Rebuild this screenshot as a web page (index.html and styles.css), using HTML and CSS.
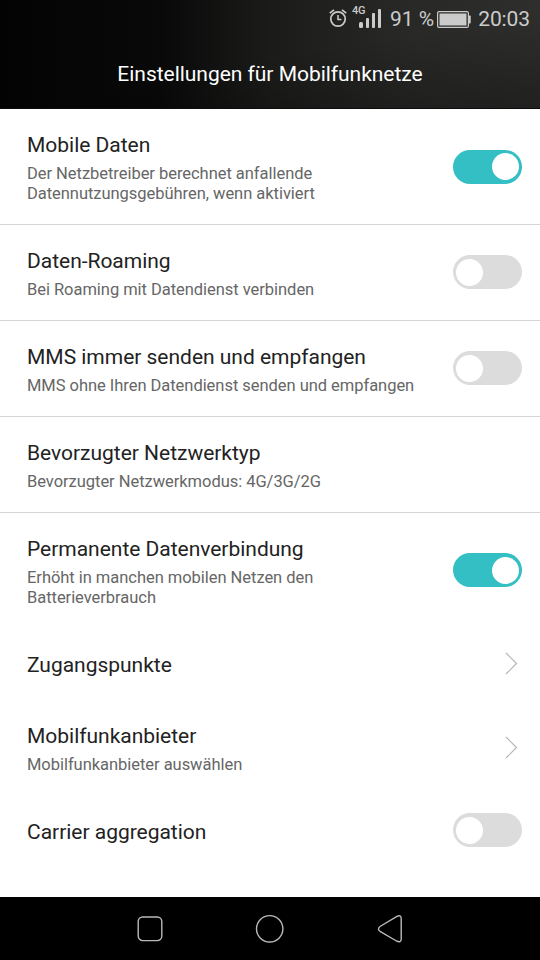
FILE: index.html
```
<!DOCTYPE html>
<html lang="de">
<head>
    <meta charset="UTF-8">
    <meta name="viewport" content="width=device-width, initial-scale=1.0">
    <title>Einstellungen für Mobilfunknetze</title>
    <link rel="stylesheet" href="styles.css">
</head>
<body>
    <div class="screen">
        <div class="header">
            <div class="statusbar">
                <svg class="alarm" width="18" height="20" viewBox="0 0 18 20" fill="none" stroke="#cbcbcb">
                    <circle cx="9" cy="11" r="7.2" stroke-width="1.7"/>
                    <path d="M9 7v4.5h3.4" stroke-width="1.5"/>
                    <path d="M.8 5.2L5 1.8M17.2 5.2L13 1.8" stroke-width="1.7"/>
                </svg>
                <div class="signal">
                    <span class="signal-type">4G</span>
                    <svg width="23" height="20" viewBox="0 0 23 20" fill="#cbcbcb">
                        <rect x="0" y="14" width="4" height="6" rx="1.5"/>
                        <rect x="7" y="10" width="3" height="10" rx="1"/>
                        <rect x="13" y="5" width="3" height="15" rx="1"/>
                        <rect x="19" y="1" width="3" height="19" rx="1"/>
                    </svg>
                </div>
                <span class="percent">91 %</span>
                <svg class="battery" width="34" height="17" viewBox="0 0 34 17">
                    <rect x=".6" y=".6" width="30.8" height="15.8" rx="1.5" fill="none" stroke="#cbcbcb" stroke-width="1.2"/>
                    <rect x="2.5" y="2.5" width="27" height="12" fill="#cbcbcb"/>
                    <rect x="31.5" y="4.5" width="2.2" height="8" rx=".8" fill="#cbcbcb"/>
                </svg>
                <span class="clock">20:03</span>
            </div>
            <h1>Einstellungen für Mobilfunknetze</h1>
        </div>

        <div class="settings">
            <div class="row tall line">
                <div class="text">
                    <div class="name">Mobile Daten</div>
                    <div class="info">Der Netzbetreiber berechnet anfallende<br>Datennutzungsgebühren, wenn aktiviert</div>
                </div>
                <div class="switch on"></div>
            </div>
            <div class="row line">
                <div class="text">
                    <div class="name">Daten-Roaming</div>
                    <div class="info">Bei Roaming mit Datendienst verbinden</div>
                </div>
                <div class="switch"></div>
            </div>
            <div class="row line">
                <div class="text">
                    <div class="name">MMS immer senden und empfangen</div>
                    <div class="info">MMS ohne Ihren Datendienst senden und empfangen</div>
                </div>
                <div class="switch"></div>
            </div>
            <div class="row line">
                <div class="text">
                    <div class="name">Bevorzugter Netzwerktyp</div>
                    <div class="info">Bevorzugter Netzwerkmodus: 4G/3G/2G</div>
                </div>
            </div>
            <div class="row tall last">
                <div class="text">
                    <div class="name">Permanente Datenverbindung</div>
                    <div class="info">Erhöht in manchen mobilen Netzen den<br>Batterieverbrauch</div>
                </div>
                <div class="switch on"></div>
            </div>
            <div class="row single">
                <div class="text">
                    <div class="name">Zugangspunkte</div>
                </div>
                <svg class="chevron" width="13" height="23" viewBox="0 0 13 23"><path d="M1 1l10.5 10.5L1 22"/></svg>
            </div>
            <div class="row">
                <div class="text">
                    <div class="name">Mobilfunkanbieter</div>
                    <div class="info">Mobilfunkanbieter auswählen</div>
                </div>
                <svg class="chevron" width="13" height="23" viewBox="0 0 13 23"><path d="M1 1l10.5 10.5L1 22"/></svg>
            </div>
            <div class="row single bottom">
                <div class="text">
                    <div class="name">Carrier aggregation</div>
                </div>
                <div class="switch"></div>
            </div>
        </div>

        <div class="navbar">
            <svg width="30" height="30" viewBox="0 0 30 30"><rect x="3.2" y="3" width="23.6" height="23.6" rx="4.5"/></svg>
            <svg width="30" height="30" viewBox="0 0 30 30"><circle cx="14.7" cy="14.8" r="13.2"/></svg>
            <svg width="30" height="30" viewBox="0 0 30 30"><path d="M5 12.5L21.5 2.6Q26.2 .2 26.2 4.5V25Q26.2 29.2 21.5 27L5 17.3Q2 14.9 5 12.5z"/></svg>
        </div>
    </div>
</body>
</html>
```
FILE: styles.css
```
body {
    margin: 0;
    background-color: #fff;
    font-family: Roboto, "Noto Sans", sans-serif;
}
.screen {
    width: 540px;
    height: 960px;
    display: flex;
    flex-direction: column;
    overflow: hidden;
}
.header {
    height: 109px;
    box-sizing: border-box;
    border-bottom: 1px solid #0c0c0c;
    background: linear-gradient(172deg, rgba(0,0,0,0) 50%, rgba(0,0,0,0.3)), linear-gradient(90deg, #030303 0%, #090909 30%, #1b1b1a 50%, #282927 75%, #2e2e2d 100%);
}
.statusbar {
    height: 38px;
    padding-right: 10px;
    display: flex;
    justify-content: flex-end;
    align-items: center;
    color: #cbcbcb;
    font-size: 21px;
}
.alarm {
    margin: 0 5px 3px 0;
}
.signal {
    display: flex;
    align-items: flex-start;
    height: 24px;
    margin-right: 8px;
}
.signal svg {
    margin: 1px 0 0 -6px;
}
.signal-type {
    font-size: 11px;
    line-height: 8px;
    font-weight: 500;
    letter-spacing: -0.4px;
}
.percent {
    margin-right: 3px;
}
.battery {
    margin-right: 7px;
}
.clock {
    letter-spacing: -0.1px;
}
h1 {
    margin: 20px 0 0;
    text-align: center;
    color: #fff;
    font-size: 21px;
    line-height: 32px;
    font-weight: 400;
    letter-spacing: -0.03px;
}
.settings {
    flex: 1;
}
.row {
    height: 96px;
    box-sizing: border-box;
    padding: 0 18px 0 27px;
    display: flex;
    align-items: center;
    justify-content: space-between;
}
.text { padding-top: 1px; }
.row.tall { height: 116px; }
.row.last { height: 114px; }
.row.single { height: 72px; }
.row.bottom { height: 71px; }
.row.single .text { padding-top: 3px; }
.row.bottom .text { padding-top: 2px; }
.row.line { border-bottom: 1px solid #d5d5d5; }
.name {
    color: #222;
    font-size: 21px;
    line-height: 30px;
    letter-spacing: -0.02px;
}
.info {
    color: #666;
    font-size: 16.5px;
    line-height: 20px;
    letter-spacing: -0.04px;
    padding-top: 4px;
}
.switch {
    width: 69px;
    height: 34px;
    box-sizing: border-box;
    padding: 3px;
    border-radius: 17px;
    background-color: #dcdcdc;
    display: flex;
    align-items: center;
}
.row.line:not(.tall) .switch,
.row.bottom .switch {
    margin-bottom: 1px;
}
.switch::before {
    content: "";
    width: 27px;
    height: 27px;
    border-radius: 50%;
    background-color: #fff;
}
.switch.on {
    background-color: #33bfc3;
    justify-content: flex-end;
}
.chevron {
    margin-right: 4px;
    fill: none;
    stroke: #b5b5b5;
    stroke-width: 1.2;
}
.navbar {
    height: 63px;
    background-color: #000;
    display: flex;
    justify-content: center;
    align-items: center;
    gap: 90px;
}
.navbar svg {
    fill: none;
    stroke: #b9b9b9;
    stroke-width: 1.4;
}
```
